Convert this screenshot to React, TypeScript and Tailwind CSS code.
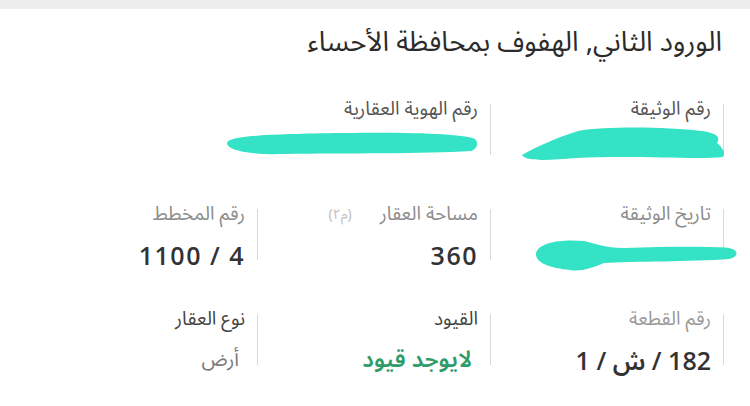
import React from 'react';

const arabic = "font-['Noto_Sans_Arabic','DejaVu_Sans','Noto_Sans',sans-serif]";

// redaction scribbles drawn over the hidden values
const Scribble = ({ d, w, h, className }: { d: string; w: number; h: number; className: string }) => (
  <svg width={w} height={h} viewBox={`0 0 ${w} ${h}`} className={`absolute ${className}`}>
    <path d={d} fill="#34e2c6" />
  </svg>
);

const Cell = ({ label, children, labelClass = 'text-[#8c8c8c]', extra }: { label: string; children: React.ReactNode; labelClass?: string; extra?: React.ReactNode }) => (
  <div className="flex">
    <div className="w-px bg-[#d9d9d9] mt-[9px] mb-[10px]" />
    <div className="flex-1 pr-3 flex flex-col">
      <div className="flex items-center h-[28px]">
        <span className={`text-[19px] leading-[28px] ${labelClass}`}>{label}</span>
        {extra}
      </div>
      <div className="relative h-[42px] flex items-end">{children}</div>
    </div>
  </div>
);

const num = "font-['Open_Sans','Noto_Sans_Arabic','DejaVu_Sans',sans-serif] font-semibold text-[25px] leading-[30px] tracking-[1.5px] text-[#333]";

export default function App() {
  return (
    <div dir="rtl" className={`w-[750px] h-[406px] bg-white overflow-hidden ${arabic}`}>
      <div className="h-[9px] bg-[#ededed]" />

      <h1 className="pr-[28px] pt-[14px] text-[27.5px] leading-[38px] text-[#2b2b2b]">
        الورود الثاني, الهفوف بمحافظة الأحساء
      </h1>

      <div className="grid grid-cols-3 pr-[26px] pl-[25px] mt-[34px] gap-y-[35px]">
        <Cell label="رقم الوثيقة" labelClass="text-[#555]">
          <Scribble
            w={210}
            h={37}
            className="top-[2px] right-[-15px]"
            d="M6,30 C20,22 40,13 62,6 C92,1 150,2 186,6 C200,8 205,12 201,18 C206,22 210,28 207,32 C180,35 120,30 60,33 C35,35 10,37 6,30 Z"
          />
        </Cell>
        <Cell label="رقم الهوية العقارية" labelClass="text-[#555]">
          <Scribble
            w={256}
            h={25}
            className="top-[8px] right-[-2px]"
            d="M3,12 C5,5 40,3 120,2 C190,1 240,3 251,8 C255,12 253,18 247,20 C200,23 120,22 60,23 C30,24 3,20 3,12 Z"
          />
        </Cell>
        <div />

        <Cell label="تاريخ الوثيقة">
          <Scribble
            w={207}
            h={36}
            className="top-[9px] right-[-28px]"
            d="M4,16 C7,5 30,2 52,4 C62,6 72,11 92,11 C130,10 172,9 197,11 C207,13 207,20 197,22 C160,25 100,24 72,26 C60,31 48,35 38,33 C18,31 3,26 4,16 Z"
          />
        </Cell>
        <Cell
          label="مساحة العقار"
          extra={<span className="mr-[28px] text-[14px] text-[#c0c0c0]">(م٢)</span>}
        >
          <span className={num}>360</span>
        </Cell>
        <Cell label="رقم المخطط">
          <span className={num}>4 / 1100</span>
        </Cell>

        <Cell label="رقم القطعة" labelClass="text-[#999]">
          <span className={num}>182 / ش / 1</span>
        </Cell>
        <Cell label="القيود" labelClass="text-[#444]">
          <span className="font-semibold text-[23px] leading-[30px] text-[#2f9c6a] pr-[6px]">لايوجد قيود</span>
        </Cell>
        <Cell label="نوع العقار" labelClass="text-[#444]">
          <span className="text-[20px] leading-[30px] text-[#7a7a7a] pr-[6px]">أرض</span>
        </Cell>
      </div>
    </div>
  );
}
